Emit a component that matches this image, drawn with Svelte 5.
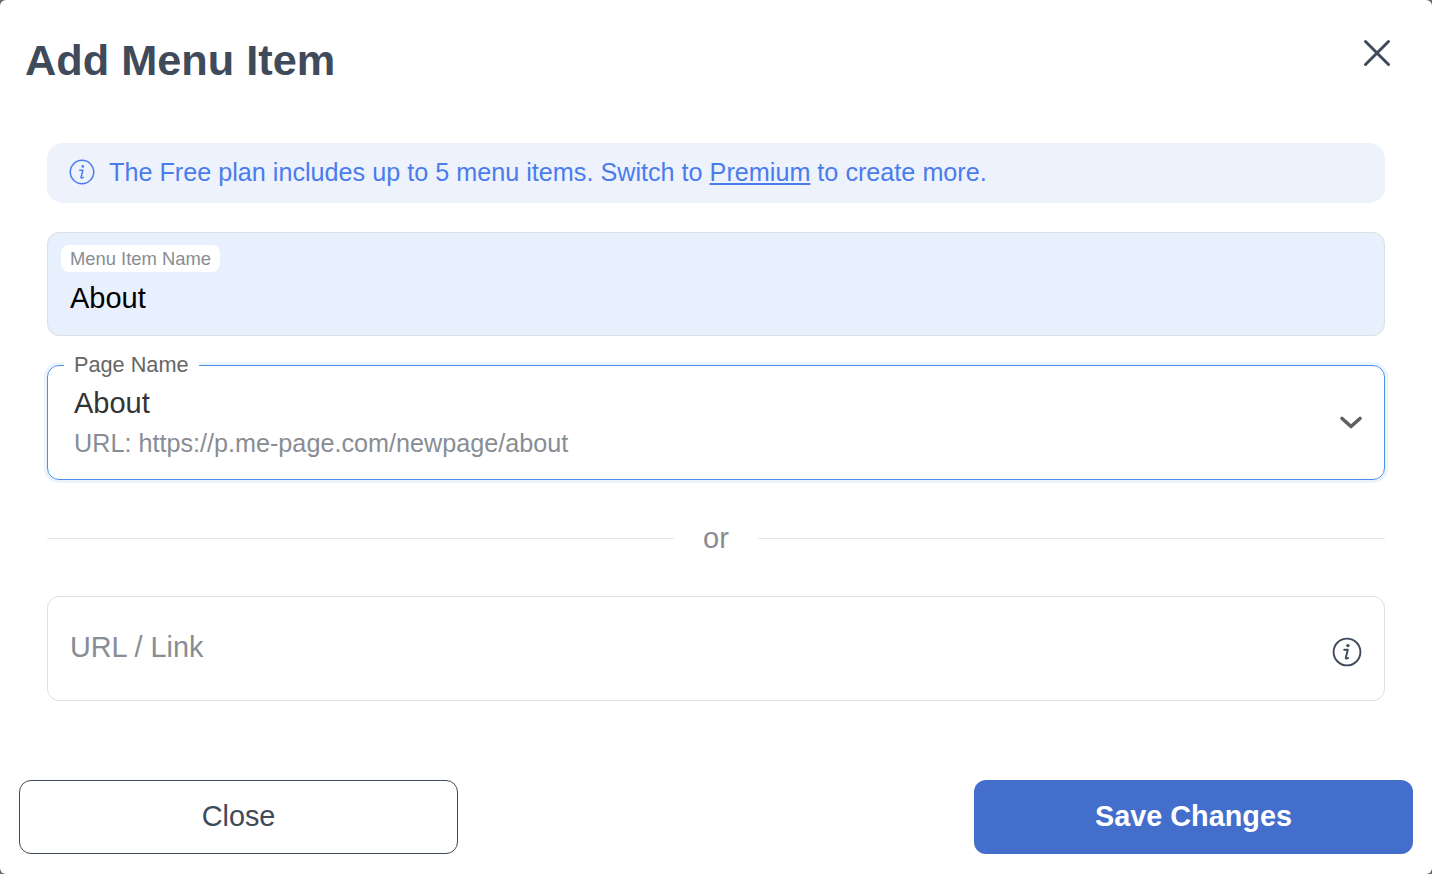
<script>
  let itemName = $state('About');
  let url = $state('');
</script>

<div class="modal">
  <header class="modal-header">
    <h1>Add Menu Item</h1>
    <button class="close-x" aria-label="Close">
      <svg width="28" height="28" viewBox="0 0 28 28" fill="none" stroke="#3f4a5a" stroke-width="3" stroke-linecap="round">
        <path d="M2.5 2.5 25.5 25.5M25.5 2.5 2.5 25.5" />
      </svg>
    </button>
  </header>

  <div class="modal-body">
    <div class="alert">
      <svg width="26" height="26" viewBox="0 0 26 26" fill="none" stroke="#4a7cec">
        <circle cx="13" cy="13" r="11.7" stroke-width="1.5" />
        <circle cx="13.8" cy="7.4" r="1.3" fill="#4a7cec" stroke="none" />
        <path d="M10.8 11.2h3.1l-1.8 7c-.2.9.7 1 2.1.1" stroke-width="1.5" stroke-linecap="round" stroke-linejoin="round" />
      </svg>
      <span>The Free plan includes up to 5 menu items. Switch to <a href="#premium">Premium</a> to create more.</span>
    </div>

    <div class="field filled">
      <span class="chip">Menu Item Name</span>
      <input bind:value={itemName} aria-label="Menu Item Name" />
    </div>

    <fieldset class="select">
      <legend>Page Name</legend>
      <div class="select-text">
        <div class="select-name">About</div>
        <div class="select-url">URL: https://p.me-page.com/newpage/about</div>
      </div>
      <svg class="chevron" width="24" height="16" viewBox="0 0 24 16" fill="none" stroke="#5f5f5f" stroke-width="3.6" stroke-linecap="round" stroke-linejoin="round">
        <path d="M3 4.5 12 12.5 21 4.5" />
      </svg>
    </fieldset>

    <div class="divider"><span>or</span></div>

    <div class="field link">
      <input bind:value={url} placeholder="URL / Link" aria-label="URL / Link" />
      <svg width="30" height="30" viewBox="0 0 30 30" fill="none" stroke="#3f4a5a">
        <circle cx="15" cy="15" r="13.4" stroke-width="1.9" />
        <circle cx="15.9" cy="8.6" r="1.7" fill="#3f4a5a" stroke="none" />
        <path d="M12.2 12.8h3.6l-2 8c-.2 1 .9 1.1 2.4.2" stroke-width="1.9" stroke-linecap="round" stroke-linejoin="round" />
      </svg>
    </div>
  </div>

  <footer class="modal-footer">
    <button class="btn btn-outline">Close</button>
    <button class="btn btn-primary">Save Changes</button>
  </footer>
</div>

<style>
  :global(body) {
    background: #6b6b6b;
    font-family: "Liberation Sans", Arial, sans-serif;
  }

  .modal {
    height: 874px;
    box-sizing: border-box;
    background: #fff;
    border-radius: 6px;
    display: flex;
    flex-direction: column;
  }

  .modal-header {
    height: 143px;
    flex: none;
    box-sizing: border-box;
    padding: 35px 41px 0 25px;
    display: flex;
    justify-content: space-between;
    align-items: flex-start;
  }

  h1 {
    margin: 0;
    font-size: 43.3px;
    line-height: 50px;
    font-weight: 700;
    color: #3f4a5a;
  }

  .close-x {
    padding: 0;
    border: 0;
    background: none;
    display: flex;
    margin-top: 4px;
  }

  .modal-body {
    padding: 0 47px;
    display: flex;
    flex-direction: column;
  }

  .alert {
    height: 60px;
    box-sizing: border-box;
    padding: 0 22px 2px;
    display: flex;
    align-items: center;
    gap: 14px;
    background: #edf2fd;
    border-radius: 16px;
    color: #4a7cec;
    font-size: 25.2px;
    margin-bottom: 29px;
  }

  .alert svg {
    margin-left: -0.5px;
    margin-right: 0.5px;
  }

  .alert a {
    color: inherit;
  }

  .field {
    box-sizing: border-box;
    border: 1px solid #dcdfe4;
    border-radius: 12px;
  }

  .filled {
    height: 104px;
    background: #e8effd;
    padding: 12px 13px;
    margin-bottom: 29px;
  }

  .chip {
    display: block;
    width: fit-content;
    box-sizing: border-box;
    height: 27px;
    line-height: 28px;
    padding: 0 9px;
    background: #fff;
    border-radius: 8px;
    font-size: 18.4px;
    color: #888d94;
  }

  input {
    display: block;
    border: 0;
    outline: 0;
    background: none;
    padding: 0;
    font-family: inherit;
    width: 100%;
  }

  .filled input {
    margin: 9px 0 0 9px;
    font-size: 29px;
    line-height: 34px;
    color: #000;
  }

  .select {
    margin: -11px 0 0;
    height: 126px;
    box-sizing: border-box;
    min-width: 0;
    border: 1px solid #4a8fe8;
    border-radius: 12px;
    box-shadow: 0 0 0 3px #ebf3fd;
    padding: 0 21px 0 26px;
    display: flex;
    align-items: center;
    justify-content: space-between;
    position: relative;
  }

  legend {
    margin-left: -10px;
    padding: 0 10px;
    font-size: 21.7px;
    line-height: 22px;
    color: #666;
    background: #fff;
  }

  .select-text {
    padding-top: 10px;
  }

  .select-name {
    font-size: 29px;
    line-height: 34px;
    color: #333;
  }

  .select-url {
    margin-top: 8px;
    font-size: 25.2px;
    line-height: 30px;
    color: #888d94;
  }

  .chevron {
    flex: none;
    margin-top: 10px;
  }

  .divider {
    height: 116px;
    display: flex;
    align-items: center;
    gap: 29px;
    color: #888d94;
    font-size: 29px;
  }

  .divider::before,
  .divider::after {
    content: "";
    flex: 1;
    height: 1px;
    background: #e3e5e8;
  }

  .link {
    height: 105px;
    padding: 6px 22px 0 22px;
    display: flex;
    align-items: center;
    gap: 12px;
  }

  .link input {
    font-size: 28.8px;
    color: #333;
    margin-top: -8px;
  }

  .link input::placeholder {
    color: #888d94;
    opacity: 1;
  }

  .link svg {
    flex: none;
  }

  .modal-footer {
    margin-top: auto;
    padding: 0 19px 20px;
    display: flex;
    justify-content: space-between;
  }

  .btn {
    width: 439px;
    height: 74px;
    padding: 0 0 2px;
    border-radius: 12px;
    font-family: inherit;
    font-size: 28.8px;
  }

  .btn-outline {
    background: #fff;
    border: 1px solid #3f4a5a;
    color: #3f4a5a;
  }

  .btn-primary {
    background: #436ecb;
    border: 0;
    color: #fff;
    font-weight: 700;
  }
</style>
